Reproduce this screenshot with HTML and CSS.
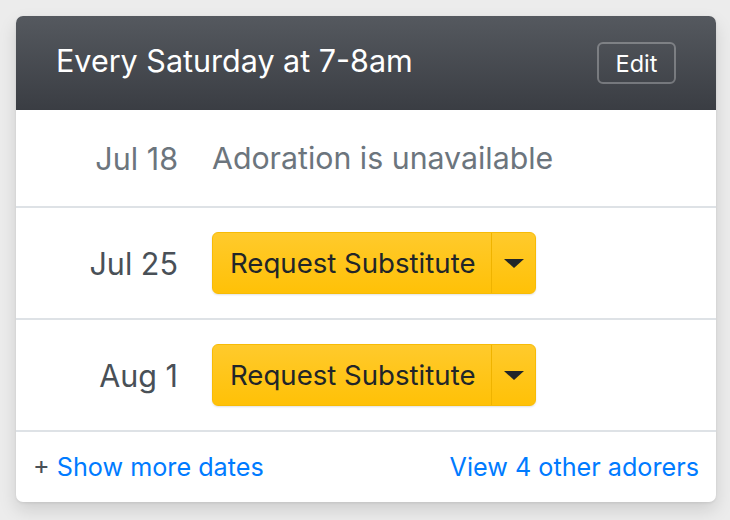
FILE: index.html
```html
<!DOCTYPE html>
<html>
<head>
<meta charset="utf-8">
<link rel="stylesheet" href="styles.css">
</head>
<body>
<div class="card">
  <div class="card-header">
    <h1 class="title">Every Saturday at 7-8am</h1>
    <button class="btn-edit">Edit</button>
  </div>
  <div class="row row-first">
    <div class="date muted">Jul 18</div>
    <div class="content muted">Adoration is unavailable</div>
  </div>
  <div class="row">
    <div class="date">Jul 25</div>
    <div class="content">
      <div class="split">
        <span class="split-main">Request Substitute</span>
        <span class="split-toggle"><span class="caret"></span></span>
      </div>
    </div>
  </div>
  <div class="row">
    <div class="date">Aug 1</div>
    <div class="content">
      <div class="split">
        <span class="split-main">Request Substitute</span>
        <span class="split-toggle"><span class="caret"></span></span>
      </div>
    </div>
  </div>
  <div class="footer">
    <span class="more"><span class="plus">+</span> <a class="link">Show more dates</a></span>
    <a class="link">View 4 other adorers</a>
  </div>
</div>
</body>
</html>
```

FILE: styles.css
```css
html, body {
  margin: 0;
  padding: 0;
}
body {
  background: #ececec;
  padding: 16px 14px 18px 16px;
  font-family: Inter, "Noto Sans", sans-serif;
}
.card {
  width: 700px;
  background: #fff;
  border-radius: 7px;
  overflow: hidden;
  box-shadow: 0 8px 18px rgba(0,0,0,0.13), 0 1px 3px rgba(0,0,0,0.08);
}
.card-header {
  height: 94px;
  box-sizing: border-box;
  background: linear-gradient(#55595f, #3a3d43);
  display: flex;
  align-items: center;
  justify-content: space-between;
  padding: 0 40px 6px 40px;
}
.title {
  margin: 0;
  color: #fff;
  font-weight: 400;
  font-size: 30.5px;
  letter-spacing: 0;
}
.btn-edit {
  background: transparent;
  border: 2px solid rgba(255,255,255,0.28);
  border-radius: 6px;
  color: #fff;
  font-family: inherit;
  font-size: 23.5px;
  width: 79px;
  height: 42px;
  padding: 0;
  margin-top: 6px;
}
.row {
  display: flex;
  align-items: center;
  height: 112px;
  border-top: 2px solid #dee2e6;
  box-sizing: border-box;
}
.row-first {
  border-top: none;
  height: 96px;
}
.date {
  width: 162px;
  text-align: right;
  font-size: 30.5px;
  color: #495057;
  flex: none;
}
.content {
  margin-left: 34px;
  font-size: 30.3px;
  color: #343a40;
}
.muted {
  color: #6c757d;
}
.split {
  display: flex;
  height: 62px;
  border-radius: 6px;
  background: linear-gradient(#ffca2c, #ffc107);
  box-shadow: 0 1px 2px rgba(0,0,0,0.12);
  border: 1px solid #f7bb06;
  box-sizing: border-box;
  width: 324px;
}
.split-main {
  display: flex;
  align-items: center;
  padding-left: 17px;
  width: 279px;
  box-sizing: border-box;
  color: #212529;
  font-size: 27.6px;
  border-right: 1px solid #efb300;
}
.split-toggle {
  flex: 1;
  display: flex;
  align-items: center;
  justify-content: center;
}
.caret {
  width: 0;
  height: 0;
  border-left: 10px solid transparent;
  border-right: 10px solid transparent;
  border-top: 9px solid #212529;
}
.footer {
  height: 72px;
  border-top: 2px solid #dee2e6;
  box-sizing: border-box;
  display: flex;
  align-items: center;
  justify-content: space-between;
  padding: 0 17px 0 17px;
  font-size: 25.2px;
}
.plus {
  color: #495057;
}
.link {
  color: #007bff;
  text-decoration: none;
}
```
